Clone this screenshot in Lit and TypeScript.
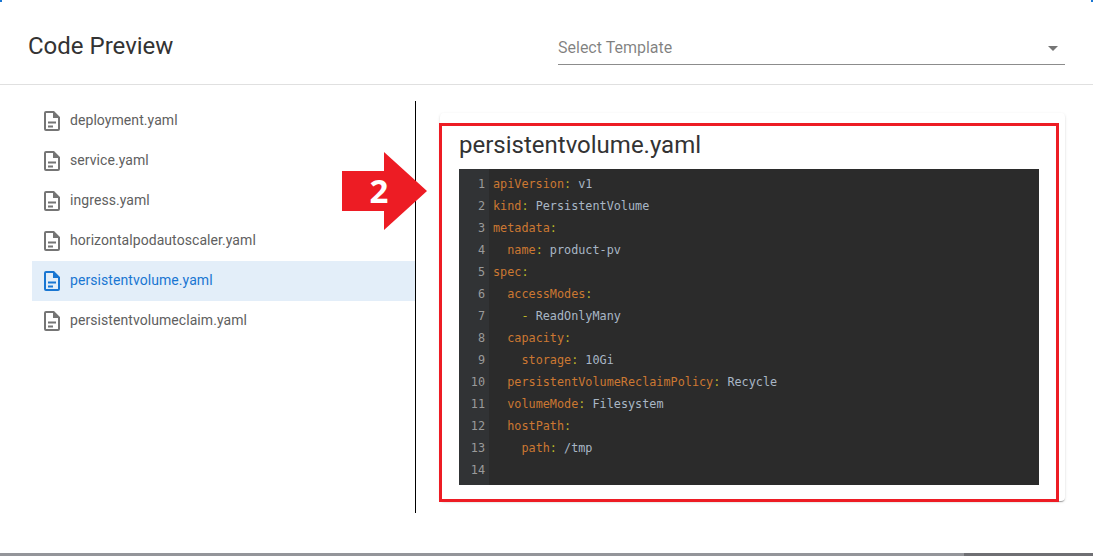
import { LitElement, html, css, svg } from "lit";
import { customElement } from "lit/decorators.js";

const files = ["deployment.yaml","service.yaml","ingress.yaml","horizontalpodautoscaler.yaml","persistentvolume.yaml","persistentvolumeclaim.yaml"];
const ACTIVE = 4;
type L = [number, string, string, string];
const lines: L[] = [
  [0,"apiVersion","v1",""],[0,"kind","PersistentVolume",""],[0,"metadata","",""],[2,"name","product-pv",""],
  [0,"spec","",""],[2,"accessModes","",""],[4,"","ReadOnlyMany","-"],[2,"capacity","",""],[4,"storage","10Gi",""],
  [2,"persistentVolumeReclaimPolicy","Recycle",""],[2,"volumeMode","Filesystem",""],[2,"hostPath","",""],[4,"path","/tmp",""],[0,"","",""],
];
const fileIcon = svg`<path fill="currentColor" d="M6 2h8l6 6v12a2 2 0 0 1-2 2H6a2 2 0 0 1-2-2V4a2 2 0 0 1 2-2zm0 2v16h12V9h-5V4H6zm2 8.5h8v2H8v-2zm0 4h5v2H8v-2z"/>`;

@customElement("app-root")
export class AppRoot extends LitElement {
  static styles = css`
    :host { display: block; width: 1093px; height: 556px; position: relative; overflow: hidden; background: #fff; font-family: Roboto, sans-serif; }
    .page { display: flex; flex-direction: column; height: 553px; }
    header { height: 84px; flex: none; border-bottom: 1px solid #e0e0e0; display: flex; align-items: flex-start; justify-content: space-between; padding: 0 28px; }
    h1 { margin: 31px 0 0; font-size: 24px; line-height: 30px; font-weight: 400; color: #333; }
    .select { width: 507px; border-bottom: 1px solid #8c8c8c; display: flex; align-items: flex-end; justify-content: space-between; padding-bottom: 4px; height: 60px; }
    .select span { font-size: 16px; line-height: 24px; color: rgba(0,0,0,.5); }
    .caret { width: 0; height: 0; border-left: 5px solid transparent; border-right: 5px solid transparent; border-top: 5px solid #757575; margin: 0 7px 9px 0; }
    .body { display: flex; padding: 16px 0 0 32px; }
    .list { width: 383px; flex: none; margin: 0; padding: 0; list-style: none; }
    .list li { height: 40px; display: flex; align-items: center; gap: 6px; padding-left: 8px; font-size: 14px; letter-spacing: .07px; color: #606060; }
    .list li span { margin-bottom: 2px; }
    .list li.active { background: #e3eef9; color: #1976d2; }
    .list svg { width: 24px; height: 24px; color: #757575; flex: none; }
    .list li.active svg { color: #1976d2; }
    .right { border-left: 1px solid #000; height: 412px; flex: none; width: 649px; box-sizing: border-box; padding: 12px 0 0 24px; }
    .card { width: 625px; height: 388px; box-sizing: border-box; padding: 17px 26px 0 19px; border-radius: 4px; box-shadow: 0 2px 1px -1px rgba(0,0,0,.2), 0 1px 1px 0 rgba(0,0,0,.14), 0 1px 3px 0 rgba(0,0,0,.12); }
    h2 { margin: 0 0 8px; font-size: 24px; line-height: 31px; font-weight: 400; color: #333; }
    .code { height: 316px; background: #2b2b2b; display: flex; font: 11.8px/22px "DejaVu Sans Mono", monospace; }
    .gutter { width: 30px; flex: none; background: #313335; color: #9a9a9a; text-align: right; box-sizing: border-box; padding: 4px 4px 0 0; }
    .src { padding: 4px 0 0 4px; white-space: pre; color: #a9b7c6; }
    .k { color: #cc7832; }
    .c { color: #bbb529; }
    .foot { height: 3px; display: flex; }
    .foot i:first-child { width: 964px; background: #94959a; }
    .foot i:last-child { flex: 1; background: #6f6f73; }
    .frame { position: absolute; left: 439px; top: 123px; width: 620px; height: 379px; box-sizing: border-box; border: 3px solid #ed1c24; pointer-events: none; }
    .arrow { position: absolute; left: 342px; top: 152px; width: 85px; height: 78px; }
    .num { position: absolute; left: 342px; top: 171px; width: 74px; height: 40px; text-align: center; color: #fff; font: 700 33px/40px "Open Sans", sans-serif; }
    .dot { position: absolute; top: 0; width: 2px; height: 2px; background: #1976d2; }
    .dot.l { left: 0; }
    .dot.r { right: 0; }
  `;
  render() {
    return html`
      <div class="page">
        <header>
          <h1>Code Preview</h1>
          <div class="select"><span>Select Template</span><div class="caret"></div></div>
        </header>
        <div class="body">
          <ul class="list">
            ${files.map((f, i) => html`<li class=${i === ACTIVE ? "active" : ""}><svg viewBox="0 0 24 24">${fileIcon}</svg><span>${f}</span></li>`)}
          </ul>
          <div class="right">
            <div class="card">
              <h2>persistentvolume.yaml</h2>
              <div class="code">
                <div class="gutter">${lines.map((_, i) => html`<div>${i + 1}</div>`)}</div>
                <div class="src">${lines.map(([ind, k, v, d]) => html`<div>${" ".repeat(ind)}${d ? html`<span class="c">${d}</span> ` : ""}${k ? html`<span class="k">${k}</span><span class="c">:</span>` : ""}${k && v ? " " : ""}${v}${!k && !v ? " " : ""}</div>`)}</div>
              </div>
            </div>
          </div>
        </div>
      </div>
      <div class="foot"><i></i><i></i></div>
      <div class="frame"></div>
      <svg class="arrow" viewBox="0 0 85 78"><path fill="#ed1c24" d="M0 19h42V0l43 39-43 39V59H0z"/></svg>
      <div class="num">2</div>
      <div class="dot l"></div>
      <div class="dot r"></div>
    `;
  }
}
